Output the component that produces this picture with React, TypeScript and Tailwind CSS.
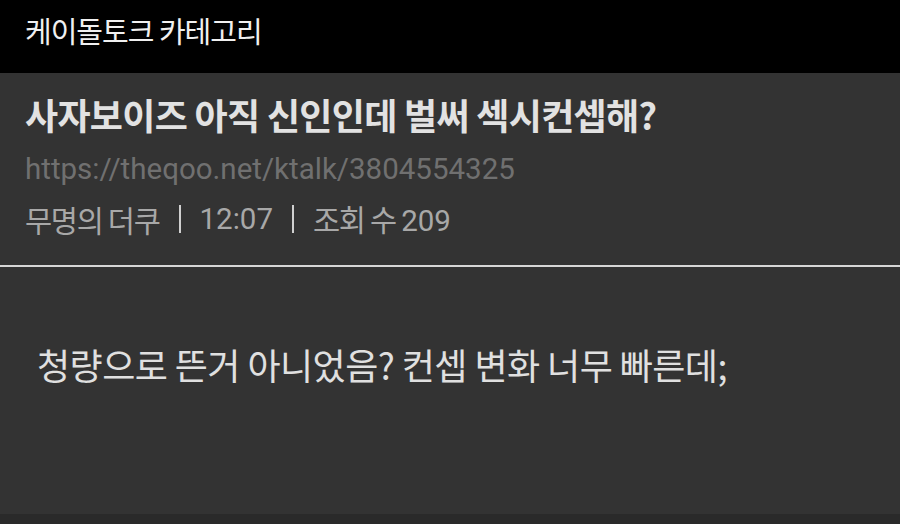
export default function App() {
  const ko = { fontFamily: '"Noto Sans CJK KR", "Noto Sans", sans-serif' };
  return (
    <div className="flex h-[524px] w-[900px] flex-col overflow-hidden bg-[#333333]" style={ko}>
      <header className="h-[73px] shrink-0 bg-black px-[25px] pt-[12px]">
        <div className="text-[29px] leading-[36px] tracking-[-1px] text-[#f0f0f0]">케이돌토크 카테고리</div>
      </header>

      <section className="flex h-[192px] shrink-0 flex-col px-[25px] pt-[19px]">
        <h1 className="text-[36px] font-bold leading-[44px] tracking-[-0.7px] text-[#e2e2e2]">
          사자보이즈 아직 신인인데 벌써 섹시컨셉해?
        </h1>
        <div className="mt-[15px] font-['Roboto',sans-serif] text-[29.5px] leading-[36px] text-[#707070]">
          https://theqoo.net/ktalk/3804554325
        </div>
        <div className="mt-[14px] flex h-[36px] items-center text-[29.5px] leading-[36px] tracking-[-1.3px] text-[#a8a8a8]">
          <span>무명의 더쿠</span>
          <span className="mx-[19px] h-[28px] w-[2px] bg-[#d0d0d0]" />
          <span className="font-['Roboto',sans-serif] tracking-normal">12:07</span>
          <span className="mx-[19px] h-[28px] w-[2px] bg-[#d0d0d0]" />
          <span>
            조회 수 <span className="font-['Roboto',sans-serif] tracking-normal">209</span>
          </span>
        </div>
      </section>

      <div className="h-[2px] shrink-0 bg-[#d6d6d6]" />

      <main className="flex-1 px-[37px] pt-[73px]">
        <p className="text-[36px] leading-[48px] tracking-[-0.55px] text-[#e0e0e0]">
          청량으로 뜬거 아니었음? 컨셉 변화 너무 빠른데;
        </p>
      </main>

      <div className="h-[10px] shrink-0 bg-[#2a2a2a]" />
    </div>
  );
}
